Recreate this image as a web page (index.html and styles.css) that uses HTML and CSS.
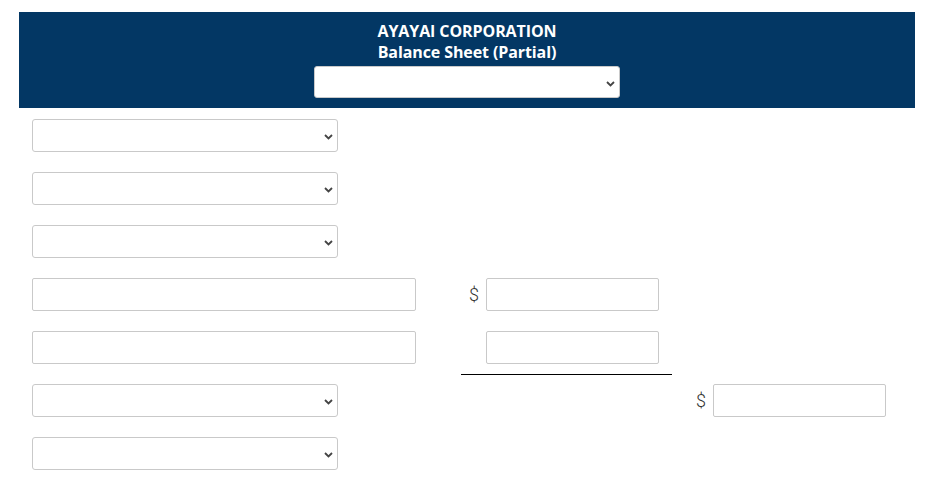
FILE: index.html
```html
<!DOCTYPE html>
<html>
<head>
<meta charset="utf-8">
<link rel="stylesheet" href="styles.css">
</head>
<body>
<div class="page">
  <header class="banner">
    <div class="title">AYAYAI CORPORATION</div>
    <div class="title">Balance Sheet (Partial)</div>
    <div class="select-wrap head-select">
      <select class="sel"><option></option></select>
      <svg class="chev" width="9" height="6" viewBox="0 0 9 6"><path d="M1 1 L4.5 4.5 L8 1" fill="none" stroke="#444" stroke-width="1.8"/></svg>
    </div>
  </header>

  <div class="rows">
    <div class="row">
      <div class="select-wrap"><select class="sel"><option></option></select><svg class="chev" width="9" height="6" viewBox="0 0 9 6"><path d="M1 1 L4.5 4.5 L8 1" fill="none" stroke="#444" stroke-width="1.8"/></svg></div>
    </div>
    <div class="row">
      <div class="select-wrap"><select class="sel"><option></option></select><svg class="chev" width="9" height="6" viewBox="0 0 9 6"><path d="M1 1 L4.5 4.5 L8 1" fill="none" stroke="#444" stroke-width="1.8"/></svg></div>
    </div>
    <div class="row">
      <div class="select-wrap"><select class="sel"><option></option></select><svg class="chev" width="9" height="6" viewBox="0 0 9 6"><path d="M1 1 L4.5 4.5 L8 1" fill="none" stroke="#444" stroke-width="1.8"/></svg></div>
    </div>
    <div class="row">
      <input class="txt wide" type="text">
      <div class="amt"><span class="dollar">$</span><input class="txt num" type="text"></div>
    </div>
    <div class="row">
      <input class="txt wide" type="text">
      <div class="amt underlined"><span class="dollar"></span><input class="txt num" type="text"></div>
    </div>
    <div class="row">
      <div class="select-wrap"><select class="sel"><option></option></select><svg class="chev" width="9" height="6" viewBox="0 0 9 6"><path d="M1 1 L4.5 4.5 L8 1" fill="none" stroke="#444" stroke-width="1.8"/></svg></div>
      <div class="spacer"></div>
      <div class="amt total"><span class="dollar">$</span><input class="txt num" type="text"></div>
    </div>
    <div class="row">
      <div class="select-wrap"><select class="sel"><option></option></select><svg class="chev" width="9" height="6" viewBox="0 0 9 6"><path d="M1 1 L4.5 4.5 L8 1" fill="none" stroke="#444" stroke-width="1.8"/></svg></div>
    </div>
  </div>
</div>
</body>
</html>
```

FILE: styles.css
```css
* { box-sizing: border-box; }

body {
  margin: 0;
  background: #fff;
  font-family: "Open Sans", "Noto Sans", sans-serif;
  color: #333;
}

.page {
  padding: 12px 16px 0 19px;
}

.banner {
  width: 896px;
  height: 96px;
  background: #033764;
  display: flex;
  flex-direction: column;
  align-items: center;
  padding-top: 9px;
}

.title {
  color: #fff;
  font-weight: 700;
  font-size: 16px;
  line-height: 21px;
  letter-spacing: -0.1px;
}

.head-select {
  margin-top: 3px;
}

.head-select .sel {
  height: 32px;
}

.select-wrap {
  position: relative;
  width: 306px;
  height: 33px;
}

.sel {
  appearance: none;
  -webkit-appearance: none;
  display: block;
  width: 306px;
  height: 33px;
  border: 1px solid #c9c9c9;
  border-radius: 3px;
  background: #fff;
  margin: 0;
  padding: 0 8px;
  font-family: inherit;
}

.chev {
  position: absolute;
  right: 5px;
  top: 50%;
  margin-top: -2px;
  pointer-events: none;
}

.rows {
  display: flex;
  flex-direction: column;
  gap: 20px;
  padding: 11px 0 0 13px;
}

.row {
  display: flex;
  align-items: flex-start;
  height: 33px;
}

.txt {
  display: block;
  height: 33px;
  border: 1px solid #c9c9c9;
  border-radius: 2px;
  background: #fff;
  margin: 0;
  padding: 0 6px;
  font-family: inherit;
}

.wide {
  width: 384px;
}

.amt {
  display: flex;
  align-items: center;
  width: 211px;
  padding-left: 8px;
  margin-left: 45px;
}

.dollar {
  width: 17px;
  font-family: Roboto, "Open Sans", sans-serif;
  font-size: 18px;
  font-weight: 300;
  color: #333;
  line-height: 31px;
}

.num {
  width: 173px;
}

.underlined {
  height: 44px;
  border-bottom: 1px solid #000;
  padding-bottom: 10px;
  align-items: flex-start;
}

.underlined .dollar {
  height: 33px;
}

.spacer {
  width: 350px;
}

.total {
  margin-left: 0;
  width: auto;
}
```
